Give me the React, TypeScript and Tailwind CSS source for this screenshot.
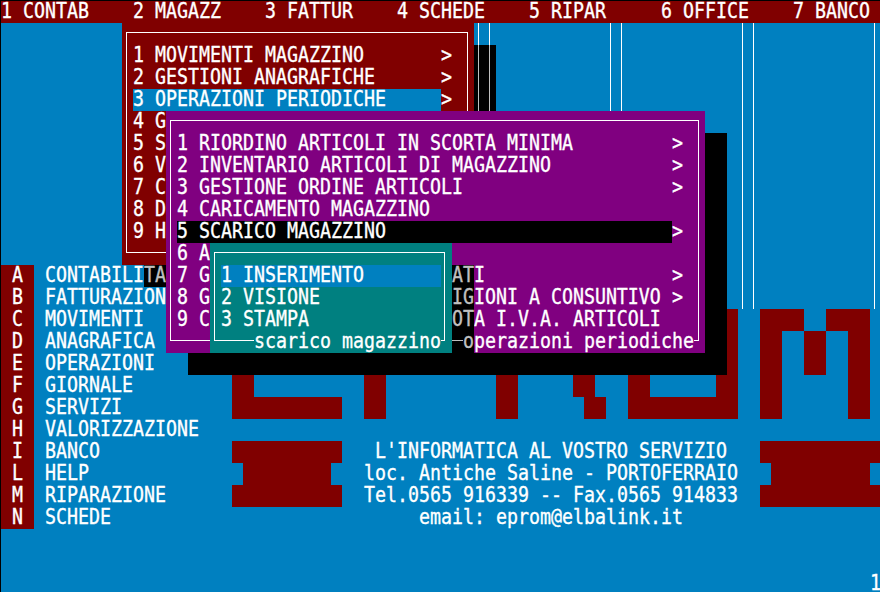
const topMenu = ["1 CONTAB", "2 MAGAZZ", "3 FATTUR", "4 SCHEDE", "5 RIPAR", "6 OFFICE", "7 BANCO"];

const sideMenu = [
  ["A", "CONTABILITA"],
  ["B", "FATTURAZIONE"],
  ["C", "MOVIMENTI"],
  ["D", "ANAGRAFICA"],
  ["E", "OPERAZIONI"],
  ["F", "GIORNALE"],
  ["G", "SERVIZI"],
  ["H", "VALORIZZAZIONE"],
  ["I", "BANCO"],
  ["L", "HELP"],
  ["M", "RIPARAZIONE"],
  ["N", "SCHEDE"],
];

const info = [
  "L'INFORMATICA AL VOSTRO SERVIZIO",
  "loc. Antiche Saline - PORTOFERRAIO",
  "Tel.0565 916339 -- Fax.0565 914833",
  "email: eprom@elbalink.it",
];

const magazzRows = [
  { label: "1 MOVIMENTI MAGAZZINO", arrow: true },
  { label: "2 GESTIONI ANAGRAFICHE", arrow: true },
  { label: "3 OPERAZIONI PERIODICHE", arrow: true, selected: true },
  { label: "4 G" },
  { label: "5 S" },
  { label: "6 V" },
  { label: "7 C" },
  { label: "8 D" },
  { label: "9 H" },
];

const periodRows = [
  { label: "1 RIORDINO ARTICOLI IN SCORTA MINIMA", arrow: true },
  { label: "2 INVENTARIO ARTICOLI DI MAGAZZINO", arrow: true },
  { label: "3 GESTIONE ORDINE ARTICOLI", arrow: true },
  { label: "4 CARICAMENTO MAGAZZINO" },
  { label: "5 SCARICO MAGAZZINO", arrow: true, selected: true },
  { label: "6 A" },
  { label: "7 G                      ATI", arrow: true },
  { label: "8 G                      IGIONI A CONSUNTIVO", arrow: true },
  { label: "9 C                      OTA I.V.A. ARTICOLI" },
];

const scaricoRows = [
  { label: "1 INSERIMENTO", selected: true },
  { label: "2 VISIONE" },
  { label: "3 STAMPA" },
];

// big EPROM letters, only the parts the windows leave visible
const logoBlocks = [
  [232, 353, 22, 66], [232, 397, 110, 22],
  [364, 353, 22, 66],
  [496, 353, 22, 66],
  [573, 353, 22, 44], [584, 397, 22, 22],
  [628, 353, 22, 66], [628, 397, 110, 22], [716, 309, 22, 110],
  [760, 309, 22, 110], [760, 309, 44, 22], [804, 331, 22, 44], [826, 309, 44, 22], [848, 309, 22, 110],
  [232, 441, 110, 22], [243, 463, 88, 22], [232, 485, 110, 22],
  [760, 441, 120, 22], [771, 463, 99, 22], [760, 485, 120, 22],
];

const logoLines = [478, 489, 610, 621, 742, 753, 874];

function T({ children }: { children: string }) {
  return <span className="inline-block origin-top scale-y-[1.13] whitespace-pre">{children}</span>;
}

function MenuRows({
  rows,
  labelWidth,
  selectedBg,
}: {
  rows: { label: string; arrow?: boolean; selected?: boolean }[];
  labelWidth: string;
  selectedBg: string;
}) {
  return (
    <div className="flex flex-col">
      {rows.map((row) => (
        <div key={row.label} className="flex h-[22px]">
          <div className={`${labelWidth} ${row.selected ? selectedBg : ""}`}>
            <T>{row.label}</T>
          </div>
          {row.arrow && <T>{">"}</T>}
        </div>
      ))}
    </div>
  );
}

export default function App() {
  return (
    <div className="relative flex h-[592px] w-[880px] flex-col overflow-hidden bg-black pl-px pt-px font-['DejaVu_Sans_Mono',monospace] text-[18.27px] leading-[18px] text-white [-webkit-text-stroke:0.3px_currentColor]">
      <div className="flex h-[22px] bg-[#800000]">
        {topMenu.map((item) => (
          <div key={item} className="w-[132px] shrink-0">
            <T>{item}</T>
          </div>
        ))}
      </div>

      <div className="flex flex-1 flex-col bg-[#0080c0]">
        <div className="flex pt-[242px]">
          <div className="w-[33px] bg-[#800000] text-center">
            {sideMenu.map(([key]) => (
              <div key={key} className="h-[22px]">
                <T>{key}</T>
              </div>
            ))}
          </div>
          <div className="ml-[11px] w-[319px]">
            {sideMenu.map(([key, label]) => (
              <div key={key} className="h-[22px]">
                <T>{label}</T>
              </div>
            ))}
          </div>
          <div className="w-[374px] pt-[176px] text-center">
            {info.map((line) => (
              <div key={line} className="h-[22px]">
                <T>{line}</T>
              </div>
            ))}
          </div>
        </div>
        <div className="ml-[869px] mt-[44px] h-[19px]">
          <T>1</T>
        </div>
      </div>

      {/* logo and the vertical rules behind the windows */}
      <svg className="absolute left-0 top-0" width="880" height="592" viewBox="0 0 880 592">
        {logoBlocks.map(([x, y, w, h]) => (
          <rect key={`${x}-${y}-${w}`} x={x} y={y} width={w} height={h} fill="#800000" />
        ))}
        {logoLines.map((x) => (
          <rect key={x} x={x} y={23} width={1} height={286} fill="#ffffff" />
        ))}
      </svg>

      {/* window 2 MAGAZZ */}
      <div className="absolute left-[122px] top-[23px] h-[242px] w-[352px] bg-[#800000] pl-[4px] pt-[9px] shadow-[22px_22px_0_0_#000]">
        <div className="h-[221px] w-[342px] border border-white pl-[6px] pt-[12px]">
          <MenuRows rows={magazzRows} labelWidth="w-[308px]" selectedBg="bg-[#0080c0]" />
        </div>
        {/* what shows through the shadow */}
        <div className="absolute left-[356px] top-[22px] flex h-[66px] w-[12px] justify-between">
          <div className="w-px bg-[#c0c0c0]" />
          <div className="w-px bg-[#c0c0c0]" />
        </div>
        <div className="absolute left-[22px] top-[242px] h-[22px] text-[#c0c0c0]">
          <T>TA</T>
        </div>
      </div>

      {/* window operazioni periodiche */}
      <div className="absolute left-[166px] top-[111px] h-[242px] w-[539px] bg-[#800080] pl-[4px] pt-[9px] shadow-[22px_22px_0_0_#000]">
        <div className="h-[221px] w-[529px] border border-white pl-[6px] pt-[12px]">
          <MenuRows rows={periodRows} labelWidth="w-[495px]" selectedBg="bg-black" />
        </div>
        <div className="absolute left-[297px] top-[220px] h-[22px] bg-[#800080]">
          <T>operazioni periodiche</T>
        </div>
      </div>

      {/* window scarico magazzino */}
      <div className="absolute left-[210px] top-[243px] h-[110px] w-[242px] bg-[#008080] pl-[4px] pt-[9px] shadow-[22px_22px_0_0_#000]">
        <div className="h-[89px] w-[231px] border border-white pl-[6px] pt-[12px]">
          <MenuRows rows={scaricoRows} labelWidth="w-[220px]" selectedBg="bg-[#0080c0]" />
        </div>
        <div className="absolute left-[44px] top-[88px] h-[22px] bg-[#008080]">
          <T>scarico magazzino</T>
        </div>
        <div className="absolute left-[242px] top-[22px] w-[22px] text-[#c0c0c0]">
          <div className="h-[22px]"><T>AT</T></div>
          <div className="h-[22px]"><T>IG</T></div>
          <div className="h-[22px]"><T>OT</T></div>
          <div className="flex h-[22px]">
            <div className="mt-[9px] h-px w-[11px] shrink-0 bg-[#c0c0c0]" />
            <T>o</T>
          </div>
        </div>
      </div>
    </div>
  );
}
